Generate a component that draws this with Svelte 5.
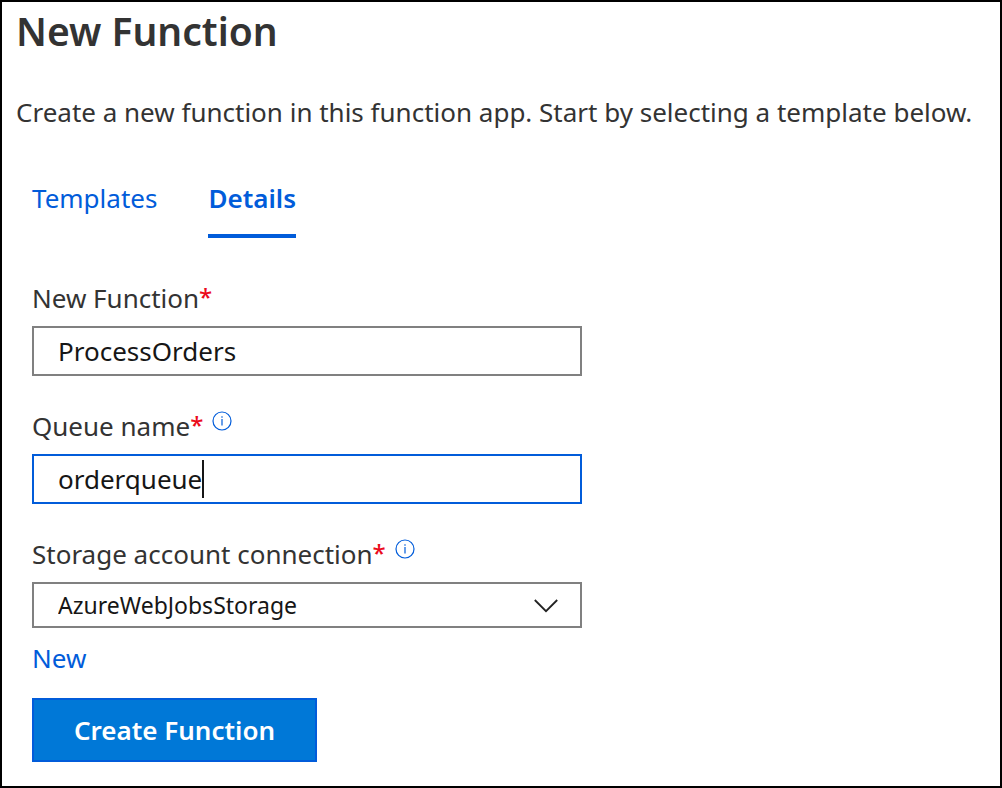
<script>
  let functionName = $state('ProcessOrders');
  let queueName = $state('orderqueue');
  let connection = $state('AzureWebJobsStorage');
</script>

<main>
  <h1>New Function</h1>
  <p class="intro">Create a new function in this function app. Start by selecting a template below.</p>

  <div class="content">
    <nav aria-label="New function steps">
      <a href="#templates">Templates</a>
      <a href="#details" class="active" aria-current="page">Details</a>
    </nav>

    <form onsubmit={(e) => e.preventDefault()}>
      <div class="field">
        <div class="label"><label for="fn">New Function<b>*</b></label></div>
        <input id="fn" type="text" bind:value={functionName} />
      </div>

      <div class="field">
        <div class="label"><label for="queue">Queue name<b>*</b></label>{@render info()}</div>
        <div class="entry">
          <input id="queue" class="focused" type="text" bind:value={queueName} />
          <span class="caret" aria-hidden="true"><span>{queueName}</span></span>
        </div>
      </div>

      <div class="field">
        <div class="label"><label for="conn">Storage account connection<b>*</b></label>{@render info()}</div>
        <div class="entry">
          <select id="conn" bind:value={connection}>
            <option>AzureWebJobsStorage</option>
          </select>
          <svg class="chevron" viewBox="0 0 26 14" aria-hidden="true"><path d="M1.8 1 L13 12.2 L24.2 1" /></svg>
        </div>
      </div>

      <a href="#new">New</a>
      <button type="submit">Create Function</button>
    </form>
  </div>
</main>

{#snippet info()}
  <svg class="info" viewBox="0 0 20 20" aria-hidden="true">
    <circle cx="10" cy="10" r="9" />
    <path d="M10 8 V14.5 M10 5.3 V6.7" />
  </svg>
{/snippet}

<style>
  :global(body) {
    margin: 0;
    background: #fff;
  }
  main {
    box-sizing: border-box;
    min-height: 100vh;
    padding: 5px 14px 24px;
    border: 2px solid #000;
    color: #333;
    font: 26px/36px "Noto Sans", "Open Sans", sans-serif;
  }
  h1 {
    margin: 0;
    font-size: 39px;
    line-height: 48px;
    font-weight: 600;
  }
  .intro {
    margin: 39px 0 0;
    white-space: nowrap;
  }
  .content {
    margin-left: 16px;
    max-width: 550px;
  }
  nav {
    display: flex;
    gap: 51px;
    margin-top: 50px;
  }
  a {
    color: #015cda;
    text-decoration: none;
  }
  nav a {
    padding-bottom: 18px;
    border-bottom: 4px solid transparent;
  }
  nav .active {
    border-color: #015cda;
    font-weight: 600;
  }
  form {
    display: flex;
    flex-direction: column;
    align-items: flex-start;
    margin-top: 42px;
  }
  .field {
    width: 100%;
    margin-bottom: 32px;
  }
  .field:nth-of-type(3) {
    margin-bottom: 12px;
  }
  .label {
    display: flex;
    gap: 9px;
    height: 36px;
    margin-bottom: 10px;
  }
  b {
    color: #eb0b1b;
    font-size: 24px;
    line-height: 1;
    font-weight: 500;
    vertical-align: 2px;
  }
  .info {
    width: 20px;
    height: 20px;
    margin-top: 3px;
    fill: none;
    stroke: #015cda;
    stroke-width: 1.2;
  }
  .entry {
    position: relative;
  }
  input,
  select {
    display: block;
    box-sizing: border-box;
    width: 100%;
    height: 50px;
    padding: 0 24px;
    border: 2px solid #808080;
    border-radius: 0;
    outline: none;
    background: #fff;
    color: #161616;
    font: inherit;
    appearance: none;
  }
  select {
    height: 46px;
    font-size: 23px;
  }
  .focused {
    border-color: #015cda;
  }
  .caret {
    position: absolute;
    top: 6px;
    left: 26px;
    height: 38px;
    border-right: 2px solid #161616;
    pointer-events: none;
  }
  .caret span {
    visibility: hidden;
  }
  .chevron {
    position: absolute;
    top: 17px;
    right: 23px;
    width: 26px;
    height: 14px;
    fill: none;
    stroke: #222;
    stroke-width: 1.8;
    pointer-events: none;
  }
  button {
    height: 64px;
    margin-top: 22px;
    padding: 0 40px;
    border: 2px solid #015cda;
    background: #0078d7;
    color: #fff;
    font: inherit;
    font-weight: 600;
  }
</style>
